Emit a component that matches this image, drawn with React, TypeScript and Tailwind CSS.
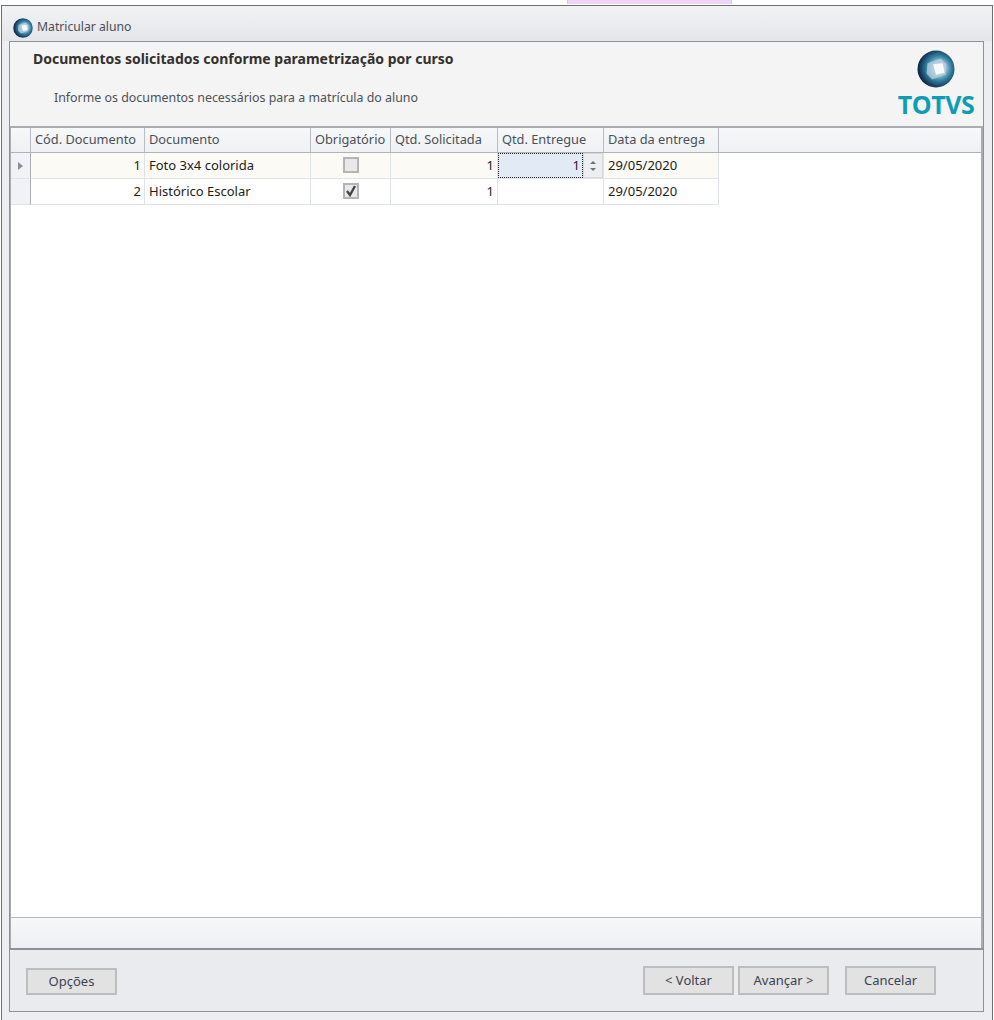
const font = "font-['Noto_Sans','Open_Sans',sans-serif]";

function Globe({ size, id }: { size: number; id: string }) {
  return (
    <svg width={size} height={size} viewBox="0 0 40 40">
      <defs>
        <radialGradient id={id} cx="0.58" cy="0.48" r="0.55">
          <stop offset="0" stopColor="#f4f8fb" />
          <stop offset="0.3" stopColor="#a9c9da" />
          <stop offset="0.62" stopColor="#2f7f9f" />
          <stop offset="1" stopColor="#10274a" />
        </radialGradient>
      </defs>
      <circle cx="20" cy="20" r="19.5" fill={`url(#${id})`} />
      <path d="M11 14 L25 9 L31 15 L30 26 L16 31 L10 25 Z" fill="#b8d2e0" opacity="0.75" />
      <path d="M17 15 L27 14 L29 24 L20 26 Z" fill="#f7fafc" />
    </svg>
  );
}

function Check({ checked }: { checked: boolean }) {
  return (
    <div className="flex h-full items-center justify-center pb-[2px]">
      <div className="flex h-[16px] w-[16px] items-center justify-center border-2 border-[#b4b4b4] bg-[#e9e9e9]">
        {checked && (
          <svg width="12" height="12" viewBox="0 0 12 12">
            <path d="M2 6 L5 10 L10 1" fill="none" stroke="#444444" strokeWidth="2.4" />
          </svg>
        )}
      </div>
    </div>
  );
}

function Button({ label, className }: { label: string; className: string }) {
  return (
    <button className={`w-[91px] border-2 border-[#bdbdbd] bg-[#e2e2e2] pt-[1px] text-[13px] text-[#3c4350] ${className}`}>
      {label}
    </button>
  );
}

const headCell = "border-r border-[#b9bdc3] pl-[4px] leading-[22px] whitespace-nowrap";
const cell = "border-r border-b border-[#dfe3e8] text-[13px] leading-[25px] text-[#1c1c1c] whitespace-nowrap";

export default function App() {
  return (
    <div className={`h-[1020px] w-[994px] overflow-hidden bg-white text-[12.5px] ${font}`}>
      <div className="h-[5px]">
        <div className="ml-[567px] h-[4px] w-[165px] border-x border-[#d9c6e6] bg-[#eed5f8]" />
      </div>

      <div className="ml-px flex h-[1015px] w-[992px] flex-col border-x border-t border-[#6d7175] bg-[#eceef1]">
        {/* title bar */}
        <div className="flex h-[35px] shrink-0 items-center bg-gradient-to-b from-[#f1f2f4] to-[#e4e6e9] pt-[8px] pl-[11px]">
          <Globe size={20} id="globe-small" />
          <span className="ml-[4px] text-[12.2px] text-[#4a4f57]">Matricular aluno</span>
        </div>

        <div className="mr-[8px] ml-[7px] flex h-[971px] flex-col border border-[#8e9296]">
          {/* wizard header */}
          <div className="relative h-[84px] shrink-0 bg-[#f4f4f4]">
            <div className="pt-[8px] pl-[23px] text-[14px] leading-[18px] font-bold text-[#33302e]">
              Documentos solicitados conforme parametrização por curso
            </div>
            <div className="pt-[21px] pl-[44px] text-[12.4px] leading-[18px] text-[#4d5156]">
              Informe os documentos necessários para a matrícula do aluno
            </div>
            <div className="absolute top-[8px] right-[8px] flex w-[78px] flex-col items-center">
              <Globe size={38} id="globe-large" />
              <span className="mt-[1px] font-['Open_Sans',sans-serif] text-[25px] leading-[30px] font-bold tracking-[-0.5px] text-[#0f9db6]">
                TOTVS
              </span>
            </div>
          </div>

          {/* grid */}
          <div className="flex min-h-0 flex-1 flex-col border-t-2 border-r-2 border-l border-[#a9adb2] bg-white">
            <div className="grid h-[25px] shrink-0 grid-cols-[20px_114px_166px_80px_107px_106px_115px_1fr] border-b border-[#aeb3ba] bg-gradient-to-b from-[#f7f8f9] to-[#eef0f3] text-[12.8px] text-[#4a5058]">
              <div className="border-r border-[#b9bdc3]" />
              <div className={headCell}>Cód. Documento</div>
              <div className={headCell}>Documento</div>
              <div className={headCell}>Obrigatório</div>
              <div className={headCell}>Qtd. Solicitada</div>
              <div className={headCell}>Qtd. Entregue</div>
              <div className={headCell}>Data da entrega</div>
              <div />
            </div>

            <div className="grid h-[26px] w-[708px] shrink-0 grid-cols-[20px_114px_166px_80px_107px_106px_115px] bg-[#fbfaf4]">
              <div className={`${cell} flex items-center justify-center border-r-[#a9adb2] bg-[#f0f2f5]`}>
                <div className="h-0 w-0 border-y-[4px] border-l-[5px] border-y-transparent border-l-[#8b8f94]" />
              </div>
              <div className={`${cell} pr-[3px] text-right`}>1</div>
              <div className={`${cell} pl-[4px]`}>Foto 3x4 colorida</div>
              <div className={cell}><Check checked={false} /></div>
              <div className={`${cell} pr-[3px] text-right`}>1</div>
              <div className={`${cell} flex`}>
                <div className="h-[25px] w-[85px] border border-dotted border-[#222] bg-[#e1eaf5] pr-[2px] text-right leading-[23px]">1</div>
                <div className="flex w-[20px] flex-col items-center justify-center gap-[4px] border border-[#d5d8dc] bg-[#eceef1]">
                  <div className="h-0 w-0 border-x-[3px] border-b-[3px] border-x-transparent border-b-[#6f7378]" />
                  <div className="h-0 w-0 border-x-[3px] border-t-[3px] border-x-transparent border-t-[#6f7378]" />
                </div>
              </div>
              <div className={`${cell} pl-[4px]`}>29/05/2020</div>
            </div>

            <div className="grid h-[26px] w-[708px] shrink-0 grid-cols-[20px_114px_166px_80px_107px_106px_115px] bg-white">
              <div className={`${cell} border-r-[#a9adb2] bg-[#f0f2f5]`} />
              <div className={`${cell} pr-[3px] text-right`}>2</div>
              <div className={`${cell} pl-[4px]`}>Histórico Escolar</div>
              <div className={cell}><Check checked /></div>
              <div className={`${cell} pr-[3px] text-right`}>1</div>
              <div className={cell} />
              <div className={`${cell} pl-[4px]`}>29/05/2020</div>
            </div>

            <div className="flex-1" />
            {/* grid footer */}
            <div className="h-[31px] shrink-0 border-t border-[#b4b8bd] bg-gradient-to-b from-[#f6f7f8] to-[#eef0f3]" />
          </div>

          {/* buttons */}
          <div className="h-[63px] shrink-0 border-t-2 border-[#8e9296] bg-[#e9ebef]">
            <div className="flex items-start pt-[16px] pl-[16px]">
              <Button label="Opções" className="mt-[2px] h-[27px]" />
              <Button label="< Voltar" className="ml-[526px] h-[29px]" />
              <Button label="Avançar >" className="ml-[4px] h-[29px]" />
              <Button label="Cancelar" className="ml-[16px] h-[29px]" />
            </div>
          </div>
        </div>
      </div>
    </div>
  );
}
